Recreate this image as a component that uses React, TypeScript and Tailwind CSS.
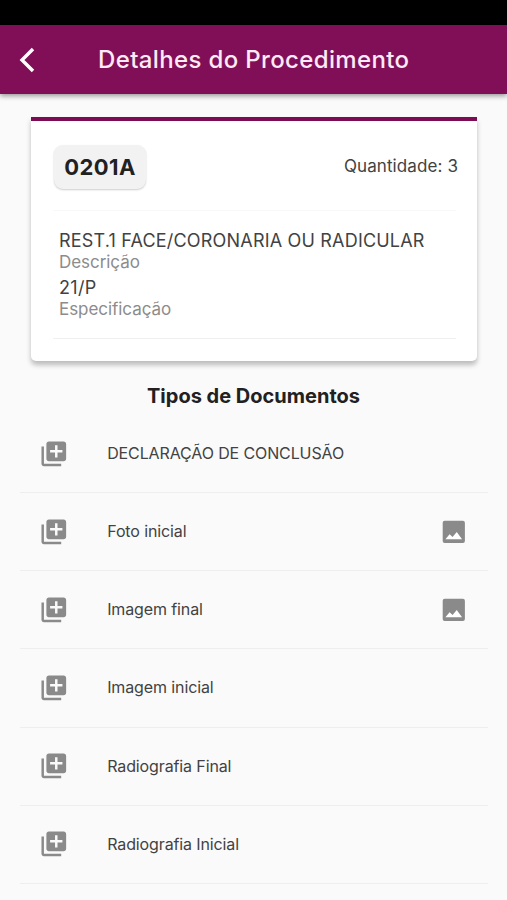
import React from "react";

const documents = [
  { name: "DECLARAÇÃO DE CONCLUSÃO", image: false },
  { name: "Foto inicial", image: true },
  { name: "Imagem final", image: true },
  { name: "Imagem inicial", image: false },
  { name: "Radiografia Final", image: false },
  { name: "Radiografia Inicial", image: false },
];

function AddIcon() {
  return (
    <svg viewBox="0 0 24 24" className="size-[29.6px] shrink-0 fill-[#8a8a8a]">
      <path d="M4 6H2v14c0 1.1.9 2 2 2h14v-2H4V6zm16-4H8c-1.1 0-2 .9-2 2v12c0 1.1.9 2 2 2h12c1.1 0 2-.9 2-2V4c0-1.1-.9-2-2-2zm-1 9h-4v4h-2v-4H9V9h4V5h2v4h4v2z" />
    </svg>
  );
}

function ImageIcon() {
  return (
    <svg viewBox="0 0 24 24" className="size-[29.6px] shrink-0">
      <rect x="3" y="3" width="18" height="18" rx="1.6" fill="#8a8a8a" />
      <path d="M5.2 18L8.6 13.9L11 16.2L14.4 12.2L18.7 18Z" fill="#fff" />
    </svg>
  );
}

export default function App() {
  return (
    <div className="flex h-[900px] w-[507px] flex-col overflow-hidden bg-[#fafafa] font-['Inter','Liberation_Sans',sans-serif] text-[#424242]">
      <div className="h-[25px] shrink-0 bg-black" />
      <header className="relative flex h-[69px] shrink-0 items-center bg-[#810f57] pl-[19px] text-[#fdeaf7] shadow-[0_2px_5px_rgba(0,0,0,0.4)]">
        <svg viewBox="0 0 16 26" className="h-[26px] w-4 fill-none stroke-white stroke-[3.4]">
          <path d="M14 2L3 13L14 24" />
        </svg>
        <h1 className="ml-[63px] whitespace-nowrap text-[24px] font-medium leading-8 tracking-[0.36px]">Detalhes do Procedimento</h1>
      </header>
      <section className="ml-[31px] mt-[23px] flex h-[244px] w-[446px] shrink-0 flex-col rounded-b-[5px] border-t-4 border-[#7c0d54] bg-white pl-[22px] pr-[19px] pt-6 shadow-[0_4px_5px_rgba(0,0,0,0.25)]">
        <div className="flex items-center justify-between">
          <span className="ml-px flex h-[44px] w-[92px] items-center justify-center rounded-[9px] bg-[#f2f2f2] text-[22px] font-bold tracking-[0.4px] text-[#212121] shadow-[0_1px_2px_rgba(0,0,0,0.2)]">0201A</span>
          <span className="text-[17px] tracking-[0.1px]">Quantidade: 3</span>
        </div>
        <div className="mr-[2px] mt-[21px] h-px bg-[#f8f8f8]" />
        <div className="ml-[6px] mt-[18px] whitespace-nowrap">
          <p className="text-[18px] leading-6 tracking-[0.19px]">REST.1 FACE/CORONARIA OU RADICULAR</p>
          <p className="text-[17px] leading-[18px] tracking-[-0.05px] text-[#8c8c8c]">Descrição</p>
          <p className="mt-[5px] text-[18px] leading-6 tracking-[0.3px]">21/P</p>
          <p className="text-[17px] leading-[18px] tracking-[-0.05px] text-[#8c8c8c]">Especificação</p>
        </div>
        <div className="mr-[2px] mt-[20px] h-px bg-[#f0f0f0]" />
      </section>
      <h2 className="mt-[21px] text-center text-[20px] font-bold leading-7 text-[#212121]">Tipos de Documentos</h2>
      <ul className="ml-5 mt-[5px] w-[468px]">
        {documents.map((item) => (
          <li key={item.name} className="flex h-[78.15px] items-center border-b border-[#eeeeee] pl-[19px] pr-[19px]">
            <AddIcon />
            <span className="ml-[38.6px] flex-1 whitespace-nowrap pb-px text-[16px] tracking-[-0.12px]">{item.name}</span>
            {item.image && <ImageIcon />}
          </li>
        ))}
      </ul>
    </div>
  );
}
